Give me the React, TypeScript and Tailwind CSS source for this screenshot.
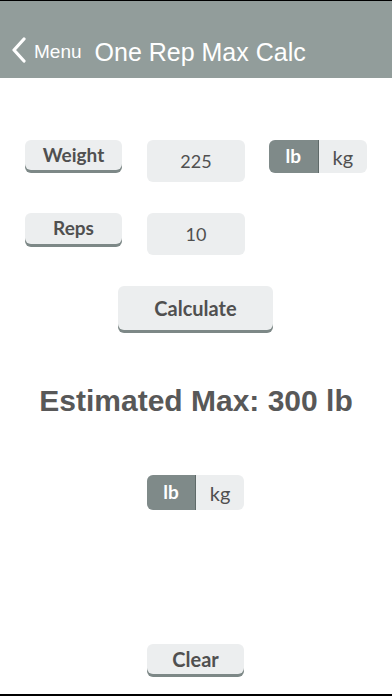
import React, { useState } from "react";

const lato = { fontFamily: "Lato, 'Open Sans', sans-serif" };
const helv = { fontFamily: "'Liberation Sans', Arial, sans-serif" };

function LabelButton({ label, className = "" }: { label: string; className?: string }) {
  return (
    <button
      className={`flex items-center justify-center rounded-[6px] bg-[#eceeef] text-[#505050] font-bold shadow-[0_3px_0_#7d8887] ${className}`}
      style={lato}
    >
      {label}
    </button>
  );
}

function UnitToggle({ unit, onChange, className = "" }: { unit: string; onChange: (u: string) => void; className?: string }) {
  return (
    <div className={`flex overflow-hidden rounded-[6px] bg-[#eceeef] ${className}`} style={lato}>
      <button
        onClick={() => onChange("lb")}
        className={`flex-1 flex items-center justify-center text-[19px] font-bold border-r border-[#5f6a69] ${unit === "lb" ? "bg-[#7f8a89] text-white" : "text-[#505050]"}`}
      >
        lb
      </button>
      <button
        onClick={() => onChange("kg")}
        className={`flex-1 flex items-center justify-center text-[20px] ${unit === "kg" ? "bg-[#7f8a89] text-white font-bold" : "text-[#505050]"}`}
      >
        kg
      </button>
    </div>
  );
}

export default function App() {
  const [inUnit, setInUnit] = useState("lb");
  const [outUnit, setOutUnit] = useState("lb");

  return (
    <div className="w-[392px] h-[696px] bg-white flex flex-col overflow-hidden">
      {/* Header */}
      <div className="h-px bg-black" />
      <div className="h-[77px] bg-[#929d9b] flex items-end pb-[13px] text-white" style={helv}>
        <svg width="16" height="26" viewBox="0 0 16 26" className="ml-[11px] mb-[2px]">
          <path d="M13 2 L3 13 L13 24" fill="none" stroke="white" strokeWidth="3.2" strokeLinecap="round" strokeLinejoin="round" />
        </svg>
        <span className="ml-[7px] text-[19px] leading-none mb-[4px]">Menu</span>
        <span className="ml-[13px] text-[25px] leading-none">One Rep Max Calc</span>
      </div>

      {/* Inputs */}
      <div className="flex flex-col flex-1">
        <div className="flex items-start mt-[62px] pl-[25px] gap-[25px]">
          <LabelButton label="Weight" className="w-[97px] h-[30px] text-[19px]" />
          <div className="w-[98px] h-[42px] rounded-[6px] bg-[#eceeef] flex items-center justify-center text-[18px] text-[#505050]" style={lato}>
            225
          </div>
          <UnitToggle unit={inUnit} onChange={setInUnit} className="w-[98px] h-[33px] -ml-px" />
        </div>

        <div className="flex items-start mt-[31px] pl-[25px] gap-[25px]">
          <LabelButton label="Reps" className="w-[97px] h-[31px] text-[19px]" />
          <div className="w-[98px] h-[42px] rounded-[6px] bg-[#eceeef] flex items-center justify-center text-[18px] text-[#505050]" style={lato}>
            10
          </div>
        </div>

        <div className="flex justify-center mt-[31px] pr-px">
          <LabelButton label="Calculate" className="w-[155px] h-[44px] text-[20px]" />
        </div>

        <div className="mt-[56px] text-center text-[30px] font-bold text-[#585858] leading-none" style={helv}>
          Estimated Max: 300 lb
        </div>

        <div className="flex justify-center mt-[59px] pr-px">
          <UnitToggle unit={outUnit} onChange={setOutUnit} className="w-[97px] h-[35px]" />
        </div>

        <div className="flex-1" />

        <div className="flex justify-center mb-[20px] pr-px">
          <LabelButton label="Clear" className="w-[97px] h-[30px] text-[20px]" />
        </div>
      </div>
      <div className="h-[2px] bg-black" />
    </div>
  );
}
